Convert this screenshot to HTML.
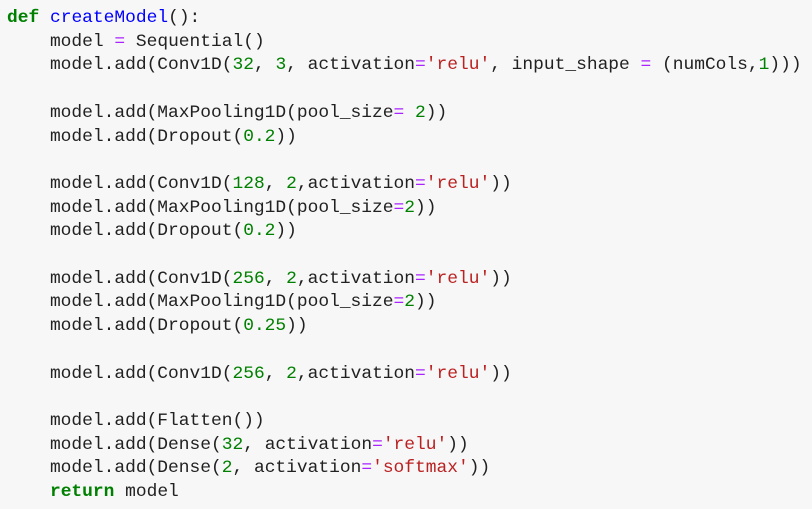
<!DOCTYPE html>
<html><head><meta charset="utf-8"><style>
html,body{margin:0;padding:0;background:#f7f7f7;width:812px;height:509px;overflow:hidden}
pre{margin:0;position:absolute;left:7px;top:7px;font-family:"Liberation Mono",monospace;font-size:17.9px;line-height:23.7px;color:#212121}
.k{color:#008000;font-weight:bold}.f{color:#0000ff}.o{color:#aa22ff}.n{color:#008000}.s{color:#ba2121}
</style></head><body><pre><span class="k">def</span> <span class="f">createModel</span>():
    model <span class="o">=</span> Sequential()
    model.add(Conv1D(<span class="n">32</span>, <span class="n">3</span>, activation<span class="o">=</span><span class="s">'relu'</span>, input_shape <span class="o">=</span> (numCols,<span class="n">1</span>)))

    model.add(MaxPooling1D(pool_size<span class="o">=</span> <span class="n">2</span>))
    model.add(Dropout(<span class="n">0.2</span>))

    model.add(Conv1D(<span class="n">128</span>, <span class="n">2</span>,activation<span class="o">=</span><span class="s">'relu'</span>))
    model.add(MaxPooling1D(pool_size<span class="o">=</span><span class="n">2</span>))
    model.add(Dropout(<span class="n">0.2</span>))

    model.add(Conv1D(<span class="n">256</span>, <span class="n">2</span>,activation<span class="o">=</span><span class="s">'relu'</span>))
    model.add(MaxPooling1D(pool_size<span class="o">=</span><span class="n">2</span>))
    model.add(Dropout(<span class="n">0.25</span>))

    model.add(Conv1D(<span class="n">256</span>, <span class="n">2</span>,activation<span class="o">=</span><span class="s">'relu'</span>))

    model.add(Flatten())
    model.add(Dense(<span class="n">32</span>, activation<span class="o">=</span><span class="s">'relu'</span>))
    model.add(Dense(<span class="n">2</span>, activation<span class="o">=</span><span class="s">'softmax'</span>))
    <span class="k">return</span> model</pre></body></html>
